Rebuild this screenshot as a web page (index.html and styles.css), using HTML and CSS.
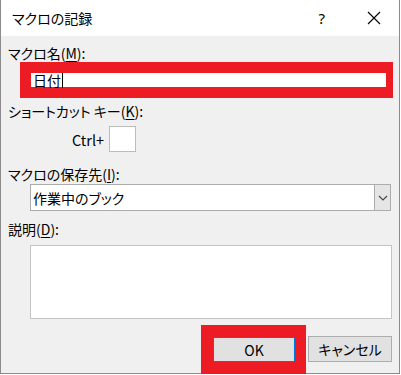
FILE: index.html
```html
<!DOCTYPE html>
<html lang="ja">
<head>
    <meta charset="UTF-8">
    <meta name="viewport" content="width=device-width, initial-scale=1.0">
    <title>マクロの記録</title>
    <link rel="stylesheet" href="styles.css">
</head>
<body>

<div class="dialog">
    <div class="titlebar">
        <span class="title">マクロの記録</span>
        <span class="help">?</span>
        <svg class="close" width="14" height="14" viewBox="0 0 14 14">
            <path d="M1 1 L13 13 M13 1 L1 13" stroke="#000" stroke-width="1.1" fill="none"/>
        </svg>
    </div>

    <div class="content">
        <div class="label first">マクロ名(<u>M</u>):</div>
        <div class="name-frame">
            <div class="name-input">日付<span class="caret"></span></div>
        </div>

        <div class="label shortcut">ショートカット キー(<u>K</u>):</div>
        <div class="ctrl-row">
            <span class="ctrl-text">Ctrl+</span>
            <div class="key-box"></div>
        </div>

        <div class="label store">マクロの保存先(<u>I</u>):</div>
        <div class="select">
            <span class="select-text">作業中のブック</span>
            <div class="select-btn">
                <svg width="10" height="6" viewBox="0 0 10 6">
                    <path d="M1 1 L5 5 L9 1" stroke="#444" stroke-width="1.1" fill="none"/>
                </svg>
            </div>
        </div>

        <div class="label desc">説明(<u>D</u>):</div>
        <div class="textarea"></div>

        <div class="footer">
            <div class="ok-frame">
                <button class="btn btn-ok">OK</button>
            </div>
            <button class="btn btn-cancel">キャンセル</button>
        </div>
    </div>
</div>

</body>
</html>
```

FILE: styles.css
```css
body {
    margin: 0;
    padding: 0;
    background-color: #ffffff;
    font-family: "Noto Sans CJK JP", "Noto Sans", sans-serif;
    font-feature-settings: "palt";
    color: #000;
}

.dialog {
    width: 400px;
    height: 374px;
    box-sizing: border-box;
    border-left: 1px solid #8c8c8c;
    border-right: 1px solid #8c8c8c;
    border-bottom: 1px solid #8c8c8c;
    display: flex;
    flex-direction: column;
    background: #f0f0f0;
}

.titlebar {
    height: 36px;
    background: #ffffff;
    display: flex;
    align-items: center;
    flex-shrink: 0;
}

.title {
    font-size: 14px;
    padding-left: 11px;
    flex: 1;
}

.help {
    font-size: 15px;
    margin-right: 42px;
    font-family: "Noto Sans", sans-serif;
}

.close {
    margin-right: 18px;
}

.content {
    padding: 9px 0 0 7px;
    display: flex;
    flex-direction: column;
}

.label {
    font-size: 14px;
    line-height: 17px;
    height: 17px;
}

.label u {
    text-underline-offset: 2px;
}

.name-frame {
    background: #ed1c24;
    margin-left: 12px;
    margin-right: 6px;
    padding: 11px 7px 11px 11px;
}

.name-input {
    background: #ffffff;
    height: 14px;
    font-size: 14px;
    line-height: 14px;
    padding-left: 2px;
    display: flex;
    align-items: center;
}

.caret {
    display: inline-block;
    width: 1px;
    height: 15px;
    background: #000;
    margin-left: 1px;
}

.shortcut {
    margin-top: 5px;
}

.ctrl-row {
    display: flex;
    align-items: center;
    margin-top: 6px;
    margin-left: 64px;
}

.ctrl-text {
    font-size: 14.5px;
    margin-right: 5px;
}

.key-box {
    width: 27px;
    height: 26px;
    box-sizing: border-box;
    background: #ffffff;
    border: 1px solid #bcbcbc;
}

.store {
    margin-top: 14px;
}

.select {
    margin-top: 1px;
    margin-left: 22px;
    width: 361px;
    height: 27px;
    box-sizing: border-box;
    background: #ffffff;
    border: 1px solid #acacac;
    display: flex;
    align-items: center;
}

.select-text {
    flex: 1;
    font-size: 14px;
    padding-left: 2px;
}

.select-btn {
    width: 17px;
    height: 27px;
    margin-right: -1px;
    box-sizing: border-box;
    background: #e5e5e5;
    border: 1px solid #acacac;
    display: flex;
    align-items: center;
    justify-content: center;
}

.desc {
    margin-top: 10px;
}

.textarea {
    margin-top: 7px;
    margin-left: 22px;
    width: 362px;
    height: 74px;
    box-sizing: border-box;
    background: #ffffff;
    border: 1px solid #c4c4c4;
}

.footer {
    display: flex;
    justify-content: flex-end;
    align-items: flex-start;
    margin-top: 6px;
    margin-right: 7px;
}

.ok-frame {
    background: #ed1c24;
    padding: 12px 11px 13px 12px;
    margin-right: 2px;
}

.btn {
    font-family: "Noto Sans CJK JP", "Noto Sans", sans-serif;
    font-feature-settings: "palt";
    font-size: 14px;
    color: #000;
    background: #e1e1e1;
    box-sizing: border-box;
    padding: 0;
    display: flex;
    align-items: center;
    justify-content: center;
}

.btn-ok {
    width: 82px;
    height: 25px;
    border: 1px solid #0078d7;
}

.btn-cancel {
    width: 84px;
    height: 26px;
    margin-top: 11px;
    border: 1px solid #adadad;
}
```
